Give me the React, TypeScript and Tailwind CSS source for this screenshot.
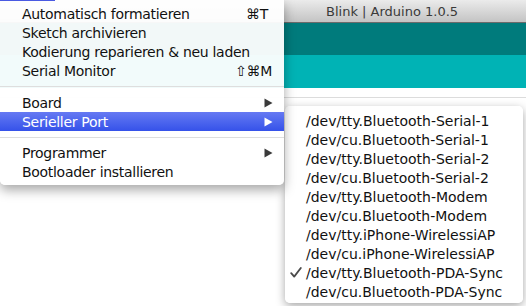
import React from "react";

const font = { fontFamily: '"Lucida Grande", "DejaVu Sans", "Noto Sans", sans-serif' };

function Item({ label, right, active }: { label: string; right?: React.ReactNode; active?: boolean }) {
  return (
    <div
      className={
        "flex h-[19px] items-center justify-between pl-[22px] pr-[11px] text-[14px] leading-none tracking-[-0.3px] " +
        (active ? "bg-gradient-to-b from-[#6679f3] to-[#3551e9] text-white" : "text-[#111]")
      }
    >
      <span>{label}</span>
      {right}
    </div>
  );
}

function Arrow({ white }: { white?: boolean }) {
  return (
    <svg width="9" height="10" viewBox="0 0 9 10">
      <path d="M0.5 0.5 L8.5 5 L0.5 9.5 Z" fill={white ? "#ffffff" : "#3a3a3a"} />
    </svg>
  );
}

const ports = [
  "/dev/tty.Bluetooth-Serial-1",
  "/dev/cu.Bluetooth-Serial-1",
  "/dev/tty.Bluetooth-Serial-2",
  "/dev/cu.Bluetooth-Serial-2",
  "/dev/tty.Bluetooth-Modem",
  "/dev/cu.Bluetooth-Modem",
  "/dev/tty.iPhone-WirelessiAP",
  "/dev/cu.iPhone-WirelessiAP",
  "/dev/tty.Bluetooth-PDA-Sync",
  "/dev/cu.Bluetooth-PDA-Sync",
];

export default function App() {
  return (
    <div className="relative h-[306px] w-[526px] overflow-hidden bg-white" style={font}>
      {/* background window */}
      <div className="flex flex-col">
        <div className="flex h-[23px] items-center border-b border-[#6b6b6b] bg-gradient-to-b from-[#ebebeb] to-[#c4c4c4] pl-[326px] pt-[1px] text-[13px] text-[#3a3a3a]">
          Blink | Arduino 1.0.5
        </div>
        <div className="h-[32px] bg-[#007b7c]" />
        <div className="h-[33px] bg-[#00b3b5]" />
        <div className="h-[9px] bg-white" />
        <div className="h-px bg-[#dcdcdc]" />
      </div>

      {/* menu bar highlight remnant */}
      <div className="absolute left-0 top-0 z-30 h-px w-[55px] bg-[#4a5ae2]" />

      {/* main menu */}
      <div className="absolute left-0 top-0 z-20 w-[284px] rounded-b-[5px] bg-white/95 pb-[4px] pt-[4px] shadow-[0_5px_12px_rgba(0,0,0,0.35)]">
        <Item label="Automatisch formatieren" right={<span className="mr-[5px]">⌘T</span>} />
        <Item label="Sketch archivieren" />
        <Item label="Kodierung reparieren & neu laden" />
        <Item label="Serial Monitor" right={<span className="mr-[1px]">⇧⌘M</span>} />
        <div className="flex h-[13px] items-center">
          <div className="h-px w-full bg-[#dedede]" />
        </div>
        <Item label="Board" right={<Arrow />} />
        <Item label="Serieller Port" active right={<Arrow white />} />
        <div className="flex h-[12px] items-center">
          <div className="h-px w-full bg-[#dedede]" />
        </div>
        <Item label="Programmer" right={<Arrow />} />
        <Item label="Bootloader installieren" />
      </div>

      {/* submenu */}
      <div className="absolute left-[285px] top-[106px] z-10 w-[238px] rounded-[5px] bg-white/95 pb-[2px] pt-[5px] shadow-[0_3px_10px_rgba(0,0,0,0.35)]">
        {ports.map((p, i) => (
          <div key={p} className="relative flex h-[19px] items-center pl-[21px] text-[14px] leading-none text-[#111]">
            {i === 8 && (
              <svg width="12" height="11" viewBox="0 0 12 11" className="absolute left-[5px] top-[4px]">
                <path d="M1.2 6.2 L4.2 9.6 L10.8 1" fill="none" stroke="#4a4a4a" strokeWidth="1.8" strokeLinecap="round" strokeLinejoin="round" />
              </svg>
            )}
            {p}
          </div>
        ))}
      </div>
    </div>
  );
}
